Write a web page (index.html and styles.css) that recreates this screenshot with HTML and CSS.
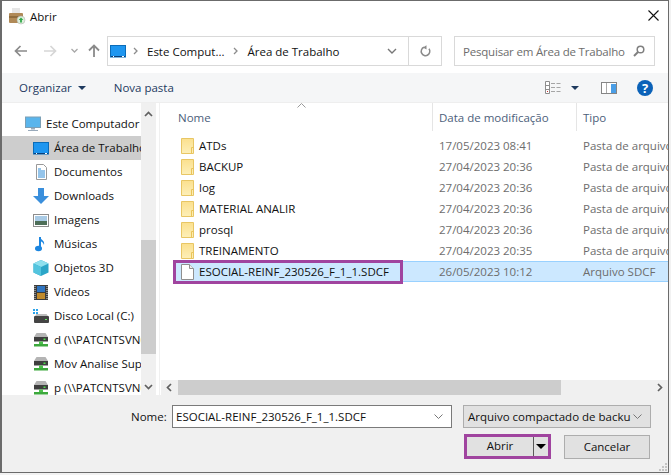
FILE: index.html
```html
<!DOCTYPE html>
<html lang="pt-BR">
<head>
<meta charset="utf-8">
<title>Abrir</title>
<link rel="stylesheet" href="styles.css">
</head>
<body>
<svg class="defs" width="0" height="0">
  <defs>
    <linearGradient id="fg" x1="0" y1="0" x2="0" y2="1"><stop offset="0" stop-color="#fbe08e"/><stop offset="1" stop-color="#fdefb8"/></linearGradient>
    <symbol id="folder" viewBox="0 0 13 16"><path d="M.5.500h12v15H.5z" fill="url(#fg)" stroke="#e8c664"/><path d="M10.500 9.500v6M10.500 9.500h2" stroke="#eac45a" fill="none"/></symbol>
    <symbol id="desk" viewBox="0 0 16 13"><rect x=".5" y=".5" width="15" height="11.500" fill="#1e96f0" stroke="#0b6cb8"/><path d="M1 11h14v1H1z" fill="#0a3f78"/><path d="M3 11.500h1M12 11.500h2" stroke="#fff"/></symbol>
    <symbol id="net" viewBox="0 0 14 14"><path d="M2.500 0h9L14 4H0z" fill="#b4b4b4"/><rect x="0" y="4" width="14" height="4.500" fill="#3e3e3e"/><rect x="9.500" y="5.500" width="2" height="1.500" fill="#4de04d"/><rect x="5" y="8.500" width="4" height="3" fill="#4cc04c"/><rect x="0" y="11" width="14" height="2.500" fill="#3ca83c"/></symbol>
  </defs>
</svg>
<div class="window">
  <header class="titlebar">
    <svg class="app-icon" width="17" height="17" viewBox="0 0 17 17"><rect x="3" y="0" width="8" height="6" fill="#e6e6e6"/><rect x="0" y="5" width="14" height="10" rx="1" fill="#b08a58"/><rect x="0" y="8" width="14" height="2" fill="#8f6d3e"/><circle cx="12" cy="12" r="4" fill="#dff0dc" stroke="#aaa" stroke-width=".5"/><path d="M12 9.500l2.300 2.500h-1.400v2.500h-1.800V12H9.700z" fill="#31a84a"/></svg>
    <span class="title">Abrir</span>
    <svg class="close" width="11" height="11" viewBox="0 0 11 11"><path d="M.5.500l10 10M10.500.500l-10 10" stroke="#111" stroke-width="1.100" fill="none"/></svg>
  </header>

  <nav class="navbar">
    <svg class="nav-btn back" width="13" height="12" viewBox="0 0 13 12"><path d="M6.500 1L1.500 6l5 5M2 6h11" stroke="#8a8a8a" stroke-width="1.700" fill="none"/></svg>
    <svg class="nav-btn fwd" width="13" height="12" viewBox="0 0 13 12"><path d="M6.500 1l5 5-5 5M11 6H0" stroke="#d6d6d6" stroke-width="1.700" fill="none"/></svg>
    <svg class="nav-btn drop" width="7" height="5" viewBox="0 0 7 5"><path d="M.5 1l3 3 3-3" stroke="#a8a8a8" stroke-width="1.300" fill="none"/></svg>
    <svg class="nav-btn up" width="12" height="13" viewBox="0 0 12 13"><path d="M1 6.500l5-5 5 5M6 2v11" stroke="#8a8a8a" stroke-width="1.800" fill="none"/></svg>
    <div class="address">
      <svg class="addr-icon" width="16" height="13"><use href="#desk"/></svg>
      <svg class="chev first" width="5" height="8" viewBox="0 0 5 8"><path d="M1 1l3 3-3 3" stroke="#8c8c8c" stroke-width="1.300" fill="none"/></svg>
      <span class="crumb">Este Comput...</span>
      <svg class="chev" width="5" height="8" viewBox="0 0 5 8"><path d="M1 1l3 3-3 3" stroke="#8c8c8c" stroke-width="1.300" fill="none"/></svg>
      <span class="crumb">Área de Trabalho</span>
      <svg class="addr-drop" width="10" height="6" viewBox="0 0 10 6"><path d="M1 1l4 4 4-4" stroke="#777" stroke-width="1.400" fill="none"/></svg>
      <div class="refresh">
        <svg width="12" height="13" viewBox="0 0 12 13"><path d="M5 2.300a4.300 4.300 0 1 0 5 1.500" stroke="#8a8a8a" stroke-width="1.500" fill="none"/><path d="M4.500 .2v4.300L8 2.300z" fill="#8a8a8a" transform="rotate(180 6 2.400)"/></svg>
      </div>
    </div>
    <div class="search">
      <span class="search-text">Pesquisar em Área de Trabalho</span>
      <svg width="12" height="12" viewBox="0 0 12 12"><circle cx="7.500" cy="4.500" r="3.300" stroke="#808080" stroke-width="1.500" fill="none"/><path d="M5 7L1 11" stroke="#808080" stroke-width="2" fill="none"/></svg>
    </div>
  </nav>

  <div class="toolbar">
    <span class="tool organizar">Organizar</span>
    <span class="caret"></span>
    <span class="tool nova">Nova pasta</span>
    <svg class="views" width="16" height="13" viewBox="0 0 16 13"><path d="M.5.500h4v12h-4zM.5 4.500h4M.5 8.500h4" stroke="#8d8d8d" fill="#fff"/><path d="M6 2.500h4M11.500 2.500h4M6 6.500h4M11.500 6.500h4M6 10.500h4M11.500 10.500h4" stroke="#a5a5a5"/><rect x="2" y="10" width="1" height="1" fill="#c33"/></svg>
    <span class="caret views-caret"></span>
    <svg class="pane" width="16" height="12" viewBox="0 0 16 12"><rect x=".5" y=".5" width="15" height="11" fill="#fff" stroke="#858585"/><rect x="10" y="2" width="5" height="9" fill="#4a9ee6"/><path d="M5.500 1v10" stroke="#aaa"/></svg>
    <svg class="help" width="16" height="16" viewBox="0 0 16 16"><circle cx="8" cy="8" r="8" fill="#0b62b8"/><text x="8" y="12.500" class="help-q" text-anchor="middle">?</text></svg>
  </div>

  <main class="content">
    <aside class="side">
      <ul class="tree">
        <li class="tree-row root"><svg class="ti" width="16" height="16" viewBox="0 0 16 16"><rect x=".5" y="1" width="15" height="10.500" fill="#5ab5ec" stroke="#7b9fb5"/><path d="M6 12h4v1.500H6zM3 14h10v1H3z" fill="#9ab"/></svg><span>Este Computador</span></li>
        <li class="tree-row active"><svg class="ti" width="16" height="13"><use href="#desk"/></svg><span>Área de Trabalho</span></li>
        <li class="tree-row"><svg class="ti" width="16" height="16" viewBox="0 0 16 16"><path d="M3.500.5h7l3 3v12h-10z" fill="#fff" stroke="#999"/><path d="M5 5h3M5 7h7M5 9h7M5 11h7M5 13h7" stroke="#2b8ad6"/></svg><span>Documentos</span></li>
        <li class="tree-row"><svg class="ti" width="16" height="16" viewBox="0 0 16 16"><path d="M5 0h6v8h5l-8 8-8-8h5z" fill="#3a8fdc"/></svg><span>Downloads</span></li>
        <li class="tree-row"><svg class="ti" width="16" height="13" viewBox="0 0 16 13"><rect x=".5" y=".5" width="15" height="12" fill="#fff" stroke="#8d8d8d"/><rect x="2" y="2" width="12" height="5" fill="#a9cbe6"/><rect x="2" y="7" width="12" height="4" fill="#4d6e58"/></svg><span>Imagens</span></li>
        <li class="tree-row"><svg class="ti" width="16" height="16" viewBox="0 0 16 16"><path d="M7 1v10.500" stroke="#1c86e0" stroke-width="2"/><ellipse cx="5.500" cy="12.500" rx="3.500" ry="2.800" fill="#1c86e0"/><path d="M7 1c1 3 5 3.500 4 8-.5-2.500-2.500-3.500-4-4z" fill="#1c86e0"/></svg><span>Músicas</span></li>
        <li class="tree-row"><svg class="ti" width="16" height="16" viewBox="0 0 16 16"><path d="M8 0l7.500 3.500v9L8 16 .5 12.500v-9z" fill="#2ba6c8"/><path d="M8 0l7.500 3.500L8 7 .5 3.500z" fill="#8fe0ee"/><path d="M8 7v9L.5 12.500v-9z" fill="#53c4de"/></svg><span>Objetos 3D</span></li>
        <li class="tree-row"><svg class="ti" width="14" height="15" viewBox="0 0 14 15"><rect width="14" height="15" fill="#3c3c3c"/><rect x="3" y="1" width="8" height="6" fill="#2f74c0"/><rect x="3" y="8" width="8" height="6" fill="#c08a2c"/><path d="M1 1v13M13 1v13" stroke="#ddd" stroke-dasharray="1 1"/></svg><span>Vídeos</span></li>
        <li class="tree-row"><svg class="ti" width="16" height="14" viewBox="0 0 16 14"><path d="M0 0h2v2H0zM3 0h2v2H3zM0 3h2v2H0zM3 3h2v2H3z" fill="#2aa3ea"/><rect x="1" y="7" width="15" height="7" rx="1" fill="#444"/><path d="M2 7l1.500-2h10L15 7z" fill="#bdbdbd"/><rect x="12" y="10" width="2" height="1" fill="#6e6"/></svg><span>Disco Local (C:)</span></li>
        <li class="tree-row"><svg class="ti" width="14" height="14"><use href="#net"/></svg><span>d (\\PATCNTSVN01) (D:)</span></li>
        <li class="tree-row"><svg class="ti" width="14" height="14"><use href="#net"/></svg><span>Mov Analise Suporte</span></li>
        <li class="tree-row"><svg class="ti" width="14" height="14"><use href="#net"/></svg><span>p (\\PATCNTSVN01) (P:)</span></li>
      </ul>
      <div class="vscroll">
        <svg class="sb-arrow" width="9" height="6" viewBox="0 0 9 6"><path d="M1 5l3.500-3.500L8 5" stroke="#606060" stroke-width="1.700" fill="none"/></svg>
        <div class="vtrack"><div class="vthumb"></div></div>
        <svg class="sb-arrow" width="9" height="6" viewBox="0 0 9 6"><path d="M1 1l3.500 3.500L8 1" stroke="#606060" stroke-width="1.700" fill="none"/></svg>
      </div>
    </aside>

    <section class="files">
      <div class="file-main">
        <div class="head">
          <svg class="sort" width="9" height="5" viewBox="0 0 9 5"><path d="M.5 4.500l4-4 4 4" stroke="#9a9a9a" fill="none"/></svg>
          <span class="col col-name">Nome</span>
          <span class="col col-date">Data de modificação</span>
          <span class="col col-type">Tipo</span>
        </div>
        <div class="rows">
          <div class="row"><svg class="fi" width="13" height="16"><use href="#folder"/></svg><span class="name">ATDs</span><span class="date">17/05/2023 08:41</span><span class="type">Pasta de arquivos</span></div>
          <div class="row"><svg class="fi" width="13" height="16"><use href="#folder"/></svg><span class="name">BACKUP</span><span class="date">27/04/2023 20:36</span><span class="type">Pasta de arquivos</span></div>
          <div class="row"><svg class="fi" width="13" height="16"><use href="#folder"/></svg><span class="name">log</span><span class="date">27/04/2023 20:36</span><span class="type">Pasta de arquivos</span></div>
          <div class="row"><svg class="fi" width="13" height="16"><use href="#folder"/></svg><span class="name">MATERIAL ANALIR</span><span class="date">27/04/2023 20:36</span><span class="type">Pasta de arquivos</span></div>
          <div class="row"><svg class="fi" width="13" height="16"><use href="#folder"/></svg><span class="name">prosql</span><span class="date">27/04/2023 20:36</span><span class="type">Pasta de arquivos</span></div>
          <div class="row"><svg class="fi" width="13" height="16"><use href="#folder"/></svg><span class="name">TREINAMENTO</span><span class="date">27/04/2023 20:35</span><span class="type">Pasta de arquivos</span></div>
          <div class="row selected">
            <svg class="fi" width="13" height="16" viewBox="0 0 13 16"><path d="M.5.500h8l4 4v11H.5z" fill="#fff" stroke="#8f8f8f"/><path d="M8.500.500v4h4" fill="#eee" stroke="#8f8f8f"/></svg>
            <span class="name">ESOCIAL-REINF_230526_F_1_1.SDCF</span><span class="date">26/05/2023 10:12</span><span class="type">Arquivo SDCF</span>
            <div class="mark-row"></div>
          </div>
        </div>
      </div>
      <div class="hscroll">
        <svg class="sb-h" width="6" height="9" viewBox="0 0 6 9"><path d="M5 1L1.500 4.500 5 8" stroke="#606060" stroke-width="1.700" fill="none"/></svg>
        <div class="hthumb"></div>
        <svg class="sb-h right" width="6" height="9" viewBox="0 0 6 9"><path d="M1 1l3.500 3.500L1 8" stroke="#606060" stroke-width="1.700" fill="none"/></svg>
      </div>
    </section>
  </main>

  <footer class="bottom">
    <div class="line">
      <label class="nome-label">Nome:</label>
      <div class="nome-input"><span>ESOCIAL-REINF_230526_F_1_1.SDCF</span><svg width="9" height="5" viewBox="0 0 9 5"><path d="M.5.500l4 4 4-4" stroke="#777" fill="none"/></svg></div>
      <div class="filter"><span>Arquivo compactado de backu</span><svg width="9" height="5" viewBox="0 0 9 5"><path d="M.5.500l4 4 4-4" stroke="#777" fill="none"/></svg></div>
    </div>
    <div class="line actions">
      <div class="abrir"><span class="abrir-text">Abrir</span><span class="split"><i class="split-caret"></i></span></div>
      <button class="cancel">Cancelar</button>
    </div>
    <svg class="grip" width="10" height="10" viewBox="0 0 10 10"><path d="M7 1h2v2H7zM4 4h2v2H4zM7 4h2v2H7zM1 7h2v2H1zM4 7h2v2H4zM7 7h2v2H7z" fill="#c4c4c4"/></svg>
  </footer>
</div>
</body>
</html>
```

FILE: styles.css
```css
* { box-sizing: border-box; }
html, body { margin: 0; padding: 0; background: #f2f2f2; }
body { width: 671px; height: 475px; overflow: hidden; font-family: "Open Sans", "Noto Sans", sans-serif; font-size: 11.500px; color: #111; }
.defs { position: absolute; }
svg { display: block; flex: none; }

.window { width: 669px; height: 473px; border: 1px solid #6b6b6b; border-left-width: 2px; background: #fff; display: flex; flex-direction: column; }

.titlebar { height: 33px; flex: none; display: flex; align-items: center; padding-left: 7px; padding-right: 9px; }
.app-icon { margin-right: 4px; margin-top: -2px; }
.title { margin-top: -3px; }
.close { margin-left: auto; margin-top: -4px; }

.navbar { height: 39px; flex: none; display: flex; align-items: flex-start; padding-top: 2px; }
.nav-btn { margin-top: 9px; }
.back { margin-left: 12px; }
.fwd { margin-left: 17px; }
.drop { margin-left: 14px; margin-top: 12px; }
.up { margin-left: 10px; margin-top: 8px; }
.address { margin-left: 7px; width: 335px; height: 30px; border: 1px solid #d9d9d9; display: flex; align-items: center; padding-left: 2px; }
.addr-icon { margin-right: 7px; }
.chev { margin-right: 9px; margin-left: 9px; }
.chev.first { margin-left: 0; }
.crumb { white-space: nowrap; }
.addr-drop { margin-left: auto; margin-right: 11px; }
.refresh { width: 33px; height: 28px; border-left: 1px solid #d9d9d9; display: flex; align-items: center; justify-content: center; }
.search { margin-left: 12px; width: 201px; height: 30px; border: 1px solid #d9d9d9; display: flex; align-items: center; justify-content: space-between; padding: 0 9px 0 8px; }
.search-text { color: #6d6d6d; white-space: nowrap; letter-spacing: -.2px; }

.toolbar { height: 30px; flex: none; background: #f5f6f7; display: flex; align-items: center; color: #1e3a5f; border-bottom: 1px solid #eeeeee; }
.organizar { margin-left: 17px; }
.caret { width: 0; height: 0; border: 4px solid transparent; border-top: 4px solid #1e3a5f; border-bottom: 0; margin-left: 6px; margin-top: 1px; }
.nova { margin-left: 28px; }
.views { margin-left: auto; }
.views-caret { margin-left: 10px; margin-right: 22px; }
.pane { margin-right: 20px; }
.help { margin-right: 15px; }
.help-q { font: bold 13px "Open Sans", sans-serif; fill: #fff; }

.content { height: 292px; flex: none; display: flex; }
.side { width: 157px; flex: none; display: flex; border-right: 2px solid #fff; overflow: hidden; }
.tree { list-style: none; margin: 9px 0 0; padding: 0; width: 139px; height: 283px; overflow: hidden; flex: none; }
.tree-row { height: 24px; display: flex; align-items: center; padding-left: 31px; white-space: nowrap; }
.tree-row .ti { margin-right: 5px; width: 16px; }
.tree-row.root { padding-left: 23px; }
.tree-row.active { background: #cdcdcd; }
.tree-row span { margin-top: -1px; }
.vscroll { width: 15px; flex: none; background: #f0f0f0; display: flex; flex-direction: column; align-items: center; padding: 8px 0 5px; }
.vtrack { flex: 1; width: 100%; padding-top: 119px; margin: 4px 0; }
.vthumb { height: 114px; background: #cdcdcd; }

.files { flex: 1; min-width: 0; display: flex; flex-direction: column; border-left: 1px solid #f0f0f0; }
.file-main { flex: 1; min-height: 0; overflow: hidden; }
.head { height: 28px; display: flex; align-items: center; color: #4c607a; position: relative; }
.sort { position: absolute; left: 137px; top: 0; }
.col { height: 100%; display: flex; align-items: center; padding-left: 6px; border-right: 1px solid #e5e5e5; white-space: nowrap; }
.col-name { width: 273px; padding-left: 18px; }
.col-date { width: 144px; }
.col-type { flex: 1; border-right: 0; }
.rows { padding: 4px 0 0; }
.row { height: 21px; display: flex; align-items: center; white-space: nowrap; margin-left: 14px; position: relative; padding-left: 7px; overflow: visible; }
.fi { margin-right: 5px; }
.name { width: 240px; flex: none; margin-top: -1px; }
.date { width: 144px; flex: none; color: #6d6d6d; margin-top: -1px; }
.type { color: #6d6d6d; margin-top: -1px; }
.selected { background: #cce8ff; border-top: 1px solid #99d1ff; border-bottom: 1px solid #99d1ff; }
.mark-row { position: absolute; left: -1px; top: -2px; width: 230px; height: 24px; border: 3px solid #a0449f; }
.hscroll { height: 15px; flex: none; background: #f0f0f0; display: flex; align-items: center; margin-left: 1px; }
.sb-h { margin-left: 5px; }
.hthumb { width: 383px; height: 15px; background: #cdcdcd; margin-left: 6px; }
.sb-h.right { margin-left: auto; margin-right: 5px; }

.bottom { flex: 1; background: #f0f0f0; position: relative; display: flex; flex-direction: column; padding-top: 10px; gap: 6px; }
.line { display: flex; align-items: center; height: 23px; }
.nome-label { margin-left: 129px; width: 41px; }
.nome-input { width: 280px; height: 23px; background: #fff; border: 1px solid #7a7a7a; display: flex; align-items: center; justify-content: space-between; padding: 0 8px 0 3px; }
.filter { margin-left: 11px; width: 188px; height: 23px; background: #e1e1e1; border: 1px solid #adadad; display: flex; align-items: center; justify-content: space-between; padding: 0 8px 0 4px; white-space: nowrap; overflow: hidden; }
.actions { align-items: center; height: 25px; }
.abrir { margin-left: 462px; width: 87px; height: 25px; border: 3px solid #a0449f; background: #e1e1e1; display: flex; align-items: stretch; }
.abrir-text { flex: 1; text-align: center; line-height: 18px; }
.split { width: 15px; border-left: 1px solid #5a5a5a; display: flex; align-items: center; justify-content: center; }
.split-caret { width: 0; height: 0; border: 5px solid transparent; border-top: 5px solid #000; border-bottom: 0; }
.cancel { margin-left: 13px; width: 86px; height: 24px; background: #e1e1e1; border: 1px solid #adadad; font: inherit; color: #111; padding: 0; }
.grip { position: absolute; right: 0; bottom: 0; }
```
